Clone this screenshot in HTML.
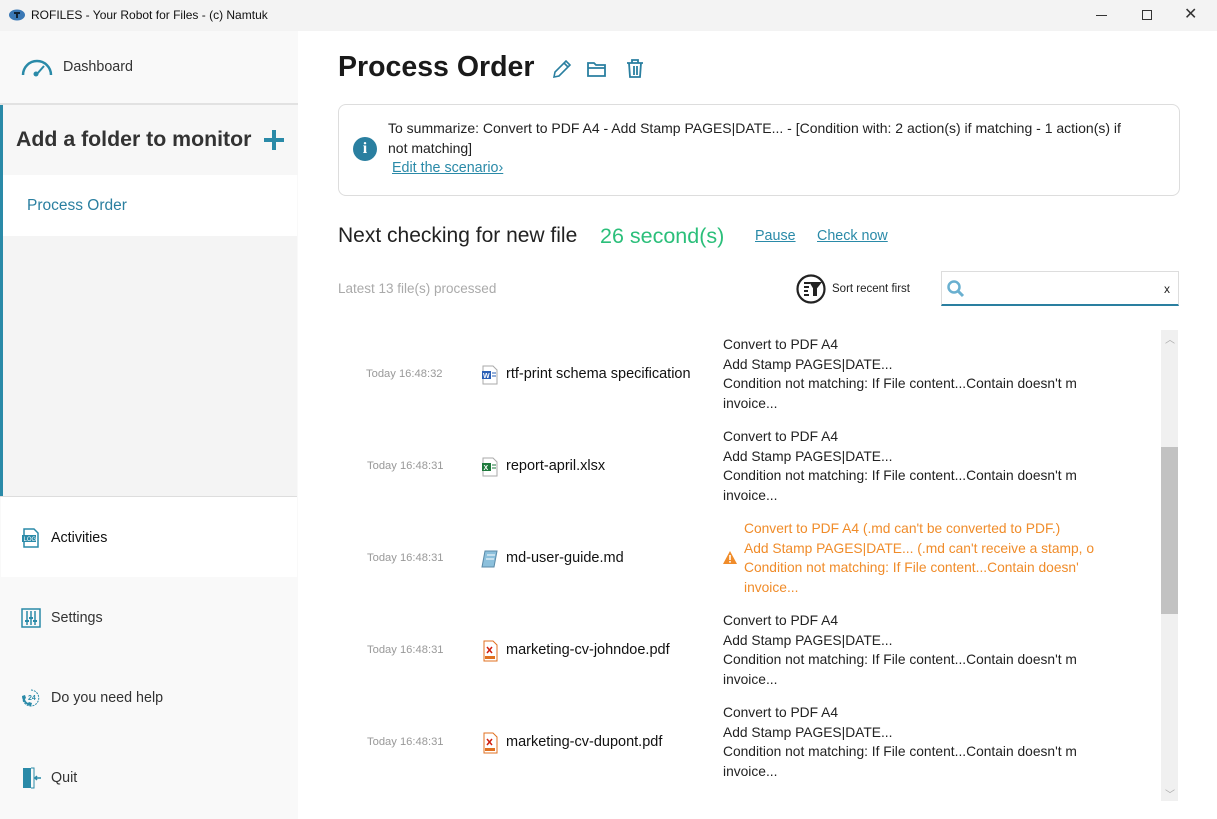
<!DOCTYPE html>
<html><head><meta charset="utf-8"><style>
*{margin:0;padding:0;box-sizing:border-box}
body{width:1217px;height:819px;overflow:hidden;font-family:"Liberation Sans",sans-serif;background:#fff;position:relative;color:#222}
.a{position:absolute;white-space:nowrap}
.tb{left:0;top:0;width:1217px;height:31px;background:#f3f3f3}
.side{left:0;top:31px;width:298px;height:788px;background:#f9f9f9}
.t{font-size:13.8px;color:#222;line-height:19.5px}
.o{color:#f08c2a}
.time{font-size:11.2px;color:#999}
.fn{font-size:14.5px;color:#111}
.lnk{color:#2a8aa8;text-decoration:underline;font-size:14.3px}
</style></head><body>
<div class="a tb"></div>
<svg class="a" style="left:8px;top:8px" width="18" height="14"><ellipse cx="9" cy="7" rx="8" ry="5.5" fill="#3a78b5"/><rect x="6" y="4" width="6" height="2" fill="#123"/><rect x="8" y="5" width="2" height="5" fill="#123"/></svg>
<div class="a" style="left:31px;top:8px;font-size:12px;color:#111">ROFILES - Your Robot for Files - (c) Namtuk</div>
<div class="a" style="left:1096px;top:15px;width:11px;height:1px;background:#333"></div>
<div class="a" style="left:1142px;top:10px;width:10px;height:10px;border:1px solid #333"></div>
<div class="a" style="left:1184px;top:4px;font-size:16px;color:#333">✕</div>

<div class="a side"></div>
<svg class="a" style="left:20px;top:57px" width="34" height="20"><path d="M3 18 A14 14 0 0 1 31 18" fill="none" stroke="#2a8aa8" stroke-width="2.5"/><line x1="17" y1="17" x2="24" y2="9" stroke="#2a8aa8" stroke-width="2"/><circle cx="16" cy="17" r="2.5" fill="#2a8aa8"/></svg>
<div class="a" style="left:63px;top:59px;font-size:14.3px;color:#333">Dashboard</div>
<div class="a" style="left:0;top:103px;width:298px;height:2px;background:#e2e2e2"></div>
<div class="a" style="left:0;top:105px;width:3px;height:391px;background:#2a8aa8"></div>
<div class="a" style="left:3px;top:105px;width:295px;height:70px;background:#f7f7f7"></div>
<div class="a" style="left:16px;top:127px;font-size:21.3px;font-weight:bold;color:#333">Add a folder to monitor</div>
<div class="a" style="left:264px;top:138px;width:20px;height:4px;background:#2a8aa8"></div>
<div class="a" style="left:272px;top:130px;width:4px;height:20px;background:#2a8aa8"></div>
<div class="a" style="left:3px;top:175px;width:294px;height:61px;background:#fff"></div>
<div class="a" style="left:27px;top:197px;font-size:15.5px;color:#2a7fa0">Process Order</div>
<div class="a" style="left:3px;top:236px;width:294px;height:260px;background:#f4f4f4"></div>
<div class="a" style="left:0;top:496px;width:297px;height:1px;background:#ddd"></div>
<div class="a" style="left:1px;top:497px;width:296px;height:80px;background:#fff"></div>
<svg class="a" style="left:21px;top:528px" width="20" height="20"><path d="M3 1h10l4 4v14H3z" fill="none" stroke="#2a8aa8" stroke-width="1.5"/><rect x="1" y="7" width="14" height="7" fill="#2a8aa8"/><text x="2.5" y="13" font-size="6" fill="#fff" font-family="Liberation Sans">LOG</text></svg>
<div class="a" style="left:51px;top:530px;font-size:14.3px;color:#111">Activities</div>
<svg class="a" style="left:21px;top:608px" width="20" height="20"><rect x="1" y="1" width="18" height="18" fill="none" stroke="#2a8aa8" stroke-width="1.5"/><path d="M6 3v14M10 3v14M14 3v14" stroke="#2a8aa8" stroke-width="1.5"/><rect x="4" y="12" width="4" height="2" fill="#2a8aa8"/><rect x="8" y="9" width="4" height="2" fill="#2a8aa8"/><rect x="12" y="12" width="4" height="2" fill="#2a8aa8"/></svg>
<div class="a" style="left:51px;top:610px;font-size:14.3px;color:#333">Settings</div>
<svg class="a" style="left:20px;top:688px" width="22" height="20"><path d="M11 2a8 8 0 1 1 -8 10" fill="none" stroke="#2a8aa8" stroke-width="1" stroke-dasharray="2 1"/><path d="M2 8c0 5 4 9 9 10l1-3-3-1-1 1c-2-1-3-3-3-4l1-1-1-3z" fill="#2a8aa8"/><text x="8" y="12" font-size="7" font-weight="bold" fill="#2a8aa8" font-family="Liberation Sans">24</text></svg>
<div class="a" style="left:51px;top:690px;font-size:14.3px;color:#333">Do you need help</div>
<svg class="a" style="left:22px;top:767px" width="20" height="22"><rect x="1" y="1" width="8" height="20" fill="#2a8aa8"/><path d="M9 1h3v20H9" fill="none" stroke="#2a8aa8"/><path d="M19 11h-5M15 9l-2 2 2 2" stroke="#2a8aa8" stroke-width="1.5" fill="none"/></svg>
<div class="a" style="left:51px;top:770px;font-size:14.3px;color:#333">Quit</div>

<div class="a" style="left:338px;top:51px;font-size:28.5px;font-weight:bold;color:#1a1a1a">Process Order</div>
<svg class="a" style="left:551px;top:57px" width="100" height="24"><path d="M3 20l1-5L15 4l4 4L8 19z M13 6l4 4" fill="none" stroke="#2a7fa0" stroke-width="1.6"/><path d="M37 6h6l2 2h9v11H37z M37 11h17" fill="none" stroke="#2a7fa0" stroke-width="1.8"/><path d="M76 6h16M81 6V3h6v3M78 6l1 14h10l1-14M83 9v9M86 9v9" fill="none" stroke="#2a7fa0" stroke-width="1.8"/></svg>
<div class="a" style="left:338px;top:104px;width:842px;height:92px;border:1px solid #ddd;border-radius:8px"></div>
<div class="a" style="left:353px;top:137px;width:24px;height:24px;border-radius:50%;background:#2a7fa0;color:#fff;font-weight:bold;font-size:16px;text-align:center;line-height:24px;font-family:'Liberation Serif',serif">i</div>
<div class="a t" style="left:388px;top:119px;font-size:14px">To summarize: Convert to PDF A4 - Add Stamp PAGES|DATE... - [Condition with: 2 action(s) if matching - 1 action(s) if</div>
<div class="a t" style="left:388px;top:139px;font-size:14px">not matching]</div>
<div class="a lnk" style="left:392px;top:160px">Edit the scenario›</div>

<div class="a" style="left:338px;top:224px;font-size:21px;color:#222">Next checking for new file</div>
<div class="a" style="left:600px;top:224px;font-size:21.5px;color:#2bbf7a">26 second(s)</div>
<div class="a lnk" style="left:755px;top:228px">Pause</div>
<div class="a lnk" style="left:817px;top:228px">Check now</div>
<div class="a" style="left:338px;top:281px;font-size:13.5px;color:#aaa">Latest 13 file(s) processed</div>
<svg class="a" style="left:796px;top:274px" width="32" height="30"><circle cx="15" cy="15" r="13.5" fill="none" stroke="#222" stroke-width="2.2"/><path d="M8 9h6M8 13h5M8 17h4M8 21h5M15 9h9l-4 5v7h-2v-7z" stroke="#222" stroke-width="2" fill="#222"/></svg>
<div class="a" style="left:832px;top:283px;font-size:11.5px;color:#222">Sort recent first</div>
<div class="a" style="left:941px;top:271px;width:238px;height:35px;border:1px solid #ddd;border-bottom:2px solid #2a7fa0"></div>
<svg class="a" style="left:946px;top:279px" width="20" height="20"><circle cx="8" cy="8" r="5.5" fill="none" stroke="#6ab0d0" stroke-width="2.5"/><path d="M12 12l5 5" stroke="#6ab0d0" stroke-width="3"/></svg>
<div class="a" style="left:1164px;top:282px;font-size:12px;color:#222">x</div>

<div class="a" style="left:1161px;top:330px;width:17px;height:471px;background:#f0f0f0"></div>
<div class="a" style="left:1161px;top:447px;width:17px;height:167px;background:#c2c2c2"></div>
<div class="a" style="left:1165px;top:331px;font-size:10px;color:#aaa">︿</div>
<div class="a" style="left:1165px;top:786px;font-size:10px;color:#aaa">﹀</div>

<div class="a time" style="left:366px;top:368px">Today 16:48:32</div>
<svg class="a" style="left:481px;top:365px" width="18" height="20"><path d="M2 1h10l4 4v14H2z" fill="#fff" stroke="#aaa"/><rect x="1" y="6" width="9" height="8" fill="#2a5fb5"/><text x="2" y="13" font-size="7" fill="#fff" font-family="Liberation Sans" font-weight="bold">W</text><path d="M11 8h4M11 11h4" stroke="#2a5fb5"/></svg>
<div class="a fn" style="left:506px;top:366px;width:187px;overflow:hidden">rtf-print schema specification</div>
<div class="a t" style="left:723px;top:335px;width:375px;overflow:hidden">Convert to PDF A4<br>Add Stamp PAGES|DATE...<br>Condition not matching: If File content...Contain doesn't m<br>invoice...</div>

<div class="a time" style="left:367px;top:460px">Today 16:48:31</div>
<svg class="a" style="left:481px;top:457px" width="18" height="20"><path d="M2 1h10l4 4v14H2z" fill="#fff" stroke="#aaa"/><rect x="1" y="6" width="9" height="8" fill="#1e7a3c"/><text x="2.5" y="13" font-size="7" fill="#fff" font-family="Liberation Sans" font-weight="bold">X</text><path d="M11 8h4M11 11h4" stroke="#1e7a3c"/></svg>
<div class="a fn" style="left:506px;top:458px">report-april.xlsx</div>
<div class="a t" style="left:723px;top:427px;width:375px;overflow:hidden">Convert to PDF A4<br>Add Stamp PAGES|DATE...<br>Condition not matching: If File content...Contain doesn't m<br>invoice...</div>

<div class="a time" style="left:367px;top:552px">Today 16:48:31</div>
<svg class="a" style="left:481px;top:549px" width="18" height="20"><path d="M4 2h12l-3 16H1z" fill="#8cc0dc" stroke="#5a8aa8"/><path d="M6 6h8M5 10h8" stroke="#fff"/></svg>
<div class="a fn" style="left:506px;top:550px">md-user-guide.md</div>
<svg class="a" style="left:722px;top:550px" width="16" height="15"><path d="M8 1L15 14H1z" fill="#f08c2a"/><rect x="7.2" y="5" width="1.6" height="5" fill="#fff"/><rect x="7.2" y="11" width="1.6" height="1.6" fill="#fff"/></svg>
<div class="a t o" style="left:744px;top:519px;width:354px;overflow:hidden">Convert to PDF A4 (.md can't be converted to PDF.)<br>Add Stamp PAGES|DATE... (.md can't receive a stamp, o<br>Condition not matching: If File content...Contain doesn'<br>invoice...</div>

<div class="a time" style="left:367px;top:644px">Today 16:48:31</div>
<svg class="a" style="left:481px;top:640px" width="18" height="22"><path d="M3 1h9l4 4v16H3z" fill="#fff" stroke="#e07020"/><path d="M6 7l5 6M11 7l-5 6" stroke="#d02010" stroke-width="1.5"/><rect x="4" y="16" width="10" height="3" fill="#e07020"/></svg>
<div class="a fn" style="left:506px;top:642px">marketing-cv-johndoe.pdf</div>
<div class="a t" style="left:723px;top:611px;width:375px;overflow:hidden">Convert to PDF A4<br>Add Stamp PAGES|DATE...<br>Condition not matching: If File content...Contain doesn't m<br>invoice...</div>

<div class="a time" style="left:367px;top:736px">Today 16:48:31</div>
<svg class="a" style="left:481px;top:732px" width="18" height="22"><path d="M3 1h9l4 4v16H3z" fill="#fff" stroke="#e07020"/><path d="M6 7l5 6M11 7l-5 6" stroke="#d02010" stroke-width="1.5"/><rect x="4" y="16" width="10" height="3" fill="#e07020"/></svg>
<div class="a fn" style="left:506px;top:734px">marketing-cv-dupont.pdf</div>
<div class="a t" style="left:723px;top:703px;width:375px;overflow:hidden">Convert to PDF A4<br>Add Stamp PAGES|DATE...<br>Condition not matching: If File content...Contain doesn't m<br>invoice...</div>
</body></html>
